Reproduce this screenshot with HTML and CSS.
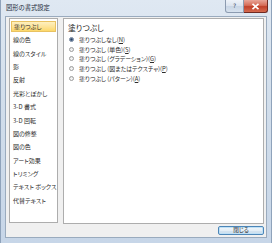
FILE: index.html
```html
<!DOCTYPE html>
<html lang="ja">
<head>
    <meta charset="UTF-8">
    <title>図形の書式設定</title>
    <link rel="stylesheet" href="styles.css">
</head>
<body>
    <div class="window">
        <div class="titlebar">
            <div class="title">図形の書式設定</div>
            <div class="caption-buttons">
                <div class="btn-help">?</div>
                <div class="btn-close">
                    <svg width="9" height="7" viewBox="0 0 9 7"><path d="M1.5 0.8 L7.5 6.2 M7.5 0.8 L1.5 6.2" stroke="#fff" stroke-width="1.6"/></svg>
                </div>
            </div>
        </div>
        <div class="client">
            <div class="panes">
                <div class="nav">
                    <div class="nav-item selected">塗りつぶし</div>
                    <div class="nav-item">線の色</div>
                    <div class="nav-item">線のスタイル</div>
                    <div class="nav-item">影</div>
                    <div class="nav-item">反射</div>
                    <div class="nav-item">光彩とぼかし</div>
                    <div class="nav-item">3-D 書式</div>
                    <div class="nav-item">3-D 回転</div>
                    <div class="nav-item">図の修整</div>
                    <div class="nav-item">図の色</div>
                    <div class="nav-item">アート効果</div>
                    <div class="nav-item">トリミング</div>
                    <div class="nav-item">テキスト ボックス</div>
                    <div class="nav-item">代替テキスト</div>
                </div>
                <div class="content">
                    <div class="content-title">塗りつぶし</div>
                    <div class="option"><span class="radio checked"></span>塗りつぶしなし(<u>N</u>)</div>
                    <div class="option"><span class="radio"></span>塗りつぶし (単色)(<u>S</u>)</div>
                    <div class="option"><span class="radio"></span>塗りつぶし (グラデーション)(<u>G</u>)</div>
                    <div class="option"><span class="radio"></span>塗りつぶし (図またはテクスチャ)(<u>P</u>)</div>
                    <div class="option"><span class="radio"></span>塗りつぶし (パターン)(<u>A</u>)</div>
                </div>
            </div>
            <div class="footer">
                <div class="push-button">閉じる</div>
            </div>
        </div>
    </div>
</body>
</html>
```

FILE: styles.css
```css
body {
    margin: 0;
    width: 272px;
    height: 243px;
    overflow: hidden;
    font-family: "Noto Sans CJK JP", "Noto Sans", sans-serif;
    font-feature-settings: "palt";
    color: #2b2b2b;
}
.window {
    width: 272px;
    height: 243px;
    box-sizing: border-box;
    padding: 0 4px 5px 4px;
    background: linear-gradient(to bottom, #dfe8f2 0%, #d2deeb 40%, #c7d6e8 100%);
    border-left: 1px solid #8fa3bb;
    border-right: 1px solid #8fa3bb;
    display: flex;
    flex-direction: column;
}
.titlebar {
    height: 16px;
    display: flex;
    justify-content: space-between;
    align-items: flex-start;
}
.title {
    font-size: 6.3px;
    line-height: 16px;
    padding-left: 1px;
    color: #1f2d3d;
}
.caption-buttons {
    display: flex;
    margin-right: -1px;
}
.btn-help {
    width: 19px;
    height: 13px;
    box-sizing: border-box;
    border: 1px solid #8c9bb0;
    border-top: none;
    border-radius: 0 0 0 3px;
    background: linear-gradient(to bottom, #eef3f9 0%, #dbe4ef 50%, #c8d5e5 51%, #d7e2ee 100%);
    font-family: "DejaVu Sans", sans-serif;
    font-size: 6px;
    line-height: 12px;
    text-align: center;
    color: #3b4b60;
}
.btn-close {
    width: 24px;
    height: 13px;
    box-sizing: border-box;
    border: 1px solid #6f2a22;
    border-top: none;
    border-left: none;
    border-radius: 0 0 3px 0;
    background: linear-gradient(to bottom, #e8a598 0%, #d66c57 45%, #c1402a 55%, #d56b4f 100%);
    display: flex;
    align-items: center;
    justify-content: center;
}
.client {
    flex: 1;
    background: #f0f0f0;
    border: 1px solid #9aabbe;
    padding: 1px 2px 0 3px;
    display: flex;
    flex-direction: column;
}
.panes {
    display: flex;
    gap: 5px;
    height: 206px;
}
.nav {
    width: 49px;
    height: 205px;
    box-sizing: border-box;
    background: #fff;
    border: 1px solid #adadad;
    padding: 1px 0 0 0;
    overflow: hidden;
}
.nav-item {
    height: 13.4px;
    font-size: 6px;
    line-height: 13.4px;
    padding-left: 3px;
    white-space: nowrap;
    box-sizing: border-box;
}
.nav-item.selected {
    margin: 1px 1px 1.2px 1px;
    padding-left: 2px;
    height: 11px;
    line-height: 9px;
    background: linear-gradient(to bottom, #fef0c0 0%, #fde49a 50%, #fcd86a 100%);
    border: 1px solid #e9c261;
}
.content {
    flex: 1;
    background: #fff;
    border: 1px solid #adadad;
    padding: 3px 0 0 4px;
}
.content-title {
    font-size: 7.8px;
    line-height: 12px;
    margin-bottom: 1px;
    color: #222;
}
.option {
    display: flex;
    align-items: center;
    height: 9.6px;
    font-size: 5.9px;
    white-space: nowrap;
}
.option u {
    text-decoration-thickness: 0.5px;
}
.radio {
    width: 5px;
    height: 5px;
    box-sizing: border-box;
    border-radius: 50%;
    border: 1px solid #9b9b9b;
    background: linear-gradient(to bottom, #e8e8e8, #fafafa);
    margin: 0 5px 0 1px;
    flex: none;
}
.radio.checked {
    border-color: #6d7f98;
    background: radial-gradient(circle, #2c3e5a 0%, #4d6a8e 55%, #c9d5e4 100%);
}
.footer {
    display: flex;
    justify-content: flex-end;
    padding-top: 2px;
}
.push-button {
    width: 46px;
    height: 9px;
    box-sizing: border-box;
    border: 1px solid #4c86b8;
    border-radius: 2px;
    background: linear-gradient(to bottom, #f2f7fb 0%, #e4eef6 50%, #d3e3f0 51%, #cfe0ee 100%);
    box-shadow: inset 0 0 0 1px #bfe0f6;
    font-size: 5.6px;
    line-height: 7px;
    text-align: center;
    color: #222;
}
```
